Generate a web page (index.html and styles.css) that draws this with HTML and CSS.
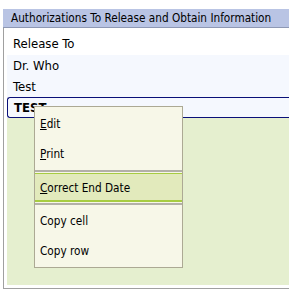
FILE: index.html
```html
<!DOCTYPE html>
<html>
<head>
<meta charset="utf-8">
<link rel="stylesheet" href="styles.css">
</head>
<body>
<div class="panel">
  <div class="title">Authorizations To Release and Obtain Information</div>
  <div class="body">
    <div class="row first">Release To</div>
    <div class="row alt">Dr. Who</div>
    <div class="row alt">Test</div>
    <div class="row alt selected">TEST</div>
    <div class="fill"></div>
  </div>
  <div class="menu">
    <div class="item"><u>E</u>dit</div>
    <div class="item"><u>P</u>rint</div>
    <div class="sep"></div>
    <div class="item hot"><u>C</u>orrect End Date</div>
    <div class="sep"></div>
    <div class="item">Copy cell</div>
    <div class="item">Copy row</div>
  </div>
</div>
</body>
</html>
```

FILE: styles.css
```css
html, body {
  margin: 0;
  padding: 0;
  background: #ffffff;
}
body {
  font-family: "DejaVu Sans Condensed", "DejaVu Sans", sans-serif;
  font-size: 11.5px;
  color: #000000;
}
.panel {
  position: relative;
  margin: 9px 1px 0 3px;
}
.title {
  height: 18px;
  line-height: 18px;
  padding-left: 8px;
  background: #b9c4e4;
  border-bottom: 1px solid #8e98b4;
  white-space: nowrap;
  font-size: 11.7px;
}
.body {
  display: flex;
  flex-direction: column;
  height: 257px;
  padding: 0 0 3px 3px;
  border-left: 1px solid #a0a0a0;
  border-bottom: 1px solid #a0a0a0;
  background: #ffffff;
}
.row {
  height: 21px;
  line-height: 21px;
  padding-left: 6px;
  box-sizing: border-box;
  white-space: nowrap;
  font-size: 13px;
}
.row.first {
  height: 27px;
  line-height: 31px;
}
.row.alt {
  background: #f5f8fe;
}
.row.selected {
  font-weight: bold;
  border: 1px solid #0a1078;
  border-right: none;
  border-radius: 3px 0 0 3px;
  line-height: 19px;
  padding-left: 6px;
}
.fill {
  flex: 1;
  background: #e5efcf;
}
.menu {
  position: absolute;
  left: 31px;
  top: 97px;
  width: 147px;
  padding: 2px 0 1px 0;
  background: #f7f7e8;
  border: 1px solid #aca994;
  font-size: 11.7px;
}
.item {
  height: 30px;
  line-height: 30px;
  padding-left: 5px;
  white-space: nowrap;
}
.item.hot {
  height: 29px;
  line-height: 28px;
  background: #e2eabc;
  border-top: 1px solid #a7cc42;
  border-bottom: 2px solid #a7cc42;
  box-sizing: border-box;
}
.sep {
  height: 2px;
  margin: 1px 0 1px 0;
  border-top: 2px solid #b3b0a8;
  box-sizing: border-box;
  background: #ffffff;
}
```
